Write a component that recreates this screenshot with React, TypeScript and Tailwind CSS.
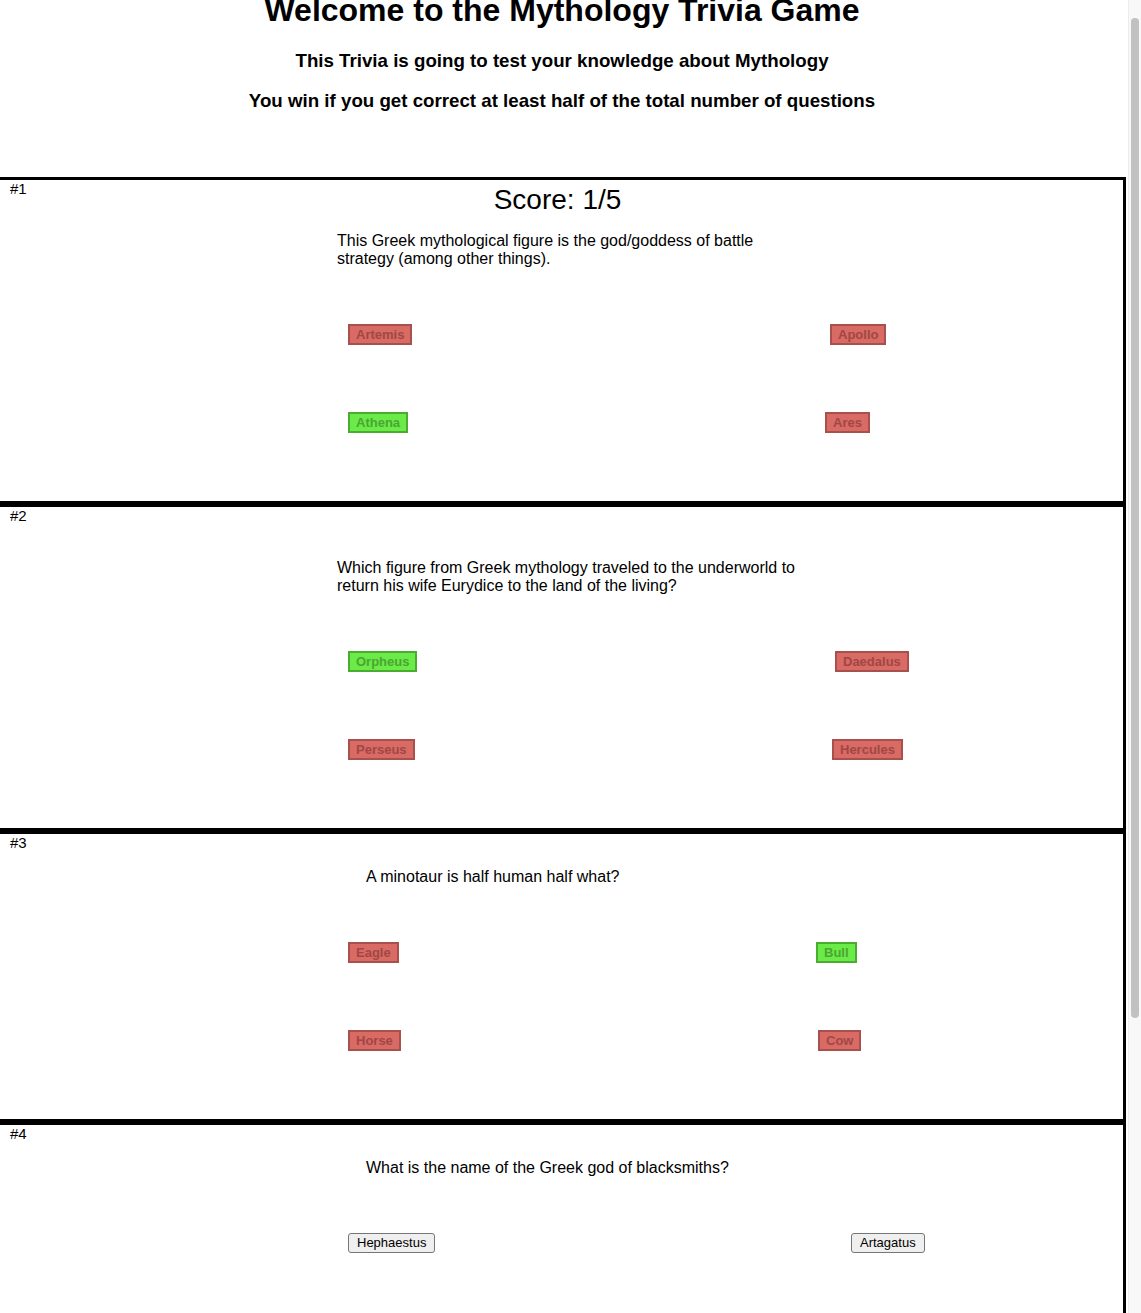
import React from "react";

type Choice = { label: string; correct?: boolean; plain?: boolean };

type Question = {
  id: number;
  text: string;
  showScore: boolean;
  textClass: string;
  topClass: string;
  rows: { left: Choice; right: Choice; rightClass: string }[];
  sectionClass: string;
};

const questions: Question[] = [
  {
    id: 1,
    text: "This Greek mythological figure is the god/goddess of battle strategy (among other things).",
    showScore: true,
    textClass: "ml-[337px]",
    topClass: "mt-[16px]",
    sectionClass: "h-[327px]",
    rows: [
      { left: { label: "Artemis" }, right: { label: "Apollo" }, rightClass: "ml-[830px]" },
      { left: { label: "Athena", correct: true }, right: { label: "Ares" }, rightClass: "ml-[825px]" },
    ],
  },
  {
    id: 2,
    text: "Which figure from Greek mythology traveled to the underworld to return his wife Eurydice to the land of the living?",
    showScore: false,
    textClass: "ml-[337px]",
    topClass: "mt-[16px]",
    sectionClass: "h-[327px]",
    rows: [
      { left: { label: "Orpheus", correct: true }, right: { label: "Daedalus" }, rightClass: "ml-[835px]" },
      { left: { label: "Perseus" }, right: { label: "Hercules" }, rightClass: "ml-[832px]" },
    ],
  },
  {
    id: 3,
    text: "A minotaur is half human half what?",
    showScore: false,
    textClass: "ml-[366px]",
    topClass: "mt-[34px]",
    sectionClass: "h-[291px]",
    rows: [
      { left: { label: "Eagle" }, right: { label: "Bull", correct: true }, rightClass: "ml-[816px]" },
      { left: { label: "Horse" }, right: { label: "Cow" }, rightClass: "ml-[818px]" },
    ],
  },
  {
    id: 4,
    text: "What is the name of the Greek god of blacksmiths?",
    showScore: false,
    textClass: "ml-[366px]",
    topClass: "mt-[34px]",
    sectionClass: "h-[291px]",
    rows: [
      {
        left: { label: "Hephaestus", plain: true },
        right: { label: "Artagatus", plain: true },
        rightClass: "ml-[851px]",
      },
    ],
  },
];

function AnswerButton({ choice }: { choice: Choice }) {
  if (choice.plain) {
    return (
      <button className="h-[20px] px-[8px] border border-[#767676] rounded-[3px] bg-[#efefef] text-[13px] leading-[16px] text-black">
        {choice.label}
      </button>
    );
  }
  const colors = choice.correct
    ? "bg-[#6aeb48] border-[#4cab31] text-[#4ca532]"
    : "bg-[#d96a64] border-[#a6514d] text-[#9f4845]";
  return (
    <button className={`h-[21px] px-[6px] border-2 font-bold text-[13px] leading-[15px] ${colors}`}>
      {choice.label}
    </button>
  );
}

function QuestionCard({ q }: { q: Question }) {
  return (
    <section
      className={`relative w-[1126px] shrink-0 border-t-[3px] border-r-[3px] border-b-[3px] border-black ${q.sectionClass}`}
    >
      <span className="absolute top-[0px] left-[10px] text-[15px] leading-[17px]">#{q.id}</span>

      {q.id <= 2 && (
        <div className="mt-[4px] h-[32px] pr-[8px] text-center text-[28px] leading-[32px]">
          {q.showScore ? "Score: 1/5" : ""}
        </div>
      )}

      <p className={`${q.topClass} ${q.textClass} w-[470px] text-[16px] leading-[18px]`}>{q.text}</p>

      <div className="mt-[56px] flex flex-col gap-[67px]">
        {q.rows.map((row) => (
          <div key={row.left.label} className="flex items-center">
            <div className="w-0 ml-[348px] flex">
              <AnswerButton choice={row.left} />
            </div>
            <div className={`${row.rightClass} -translate-x-[348px] flex`}>
              <AnswerButton choice={row.right} />
            </div>
          </div>
        ))}
      </div>
    </section>
  );
}

export default function App() {
  return (
    <div className="flex w-[1141px] h-[1313px] overflow-hidden bg-white text-black font-['Liberation_Sans',Arial,sans-serif]">
      <main className="w-[1128px] shrink-0 flex flex-col">
        <header className="text-center pr-[4px]">
          <h1 className="-mt-[8px] text-[32px] leading-[37px] font-bold">Welcome to the Mythology Trivia Game</h1>
          <h3 className="mt-[21px] text-[18.72px] leading-[22px] font-bold">
            This Trivia is going to test your knowledge about Mythology
          </h3>
          <h3 className="mt-[18px] text-[18.72px] leading-[22px] font-bold">
            You win if you get correct at least half of the total number of questions
          </h3>
        </header>

        <div className="mt-[65px] flex flex-col">
          {questions.map((q) => (
            <QuestionCard key={q.id} q={q} />
          ))}
        </div>
      </main>

      <div className="w-[13px] shrink-0 bg-[#f8f8f8] border-l border-[#ececec] pt-[18px] flex justify-center">
        <div className="w-[8px] h-[1000px] rounded-full bg-[#c1c1c1]" />
      </div>
    </div>
  );
}
